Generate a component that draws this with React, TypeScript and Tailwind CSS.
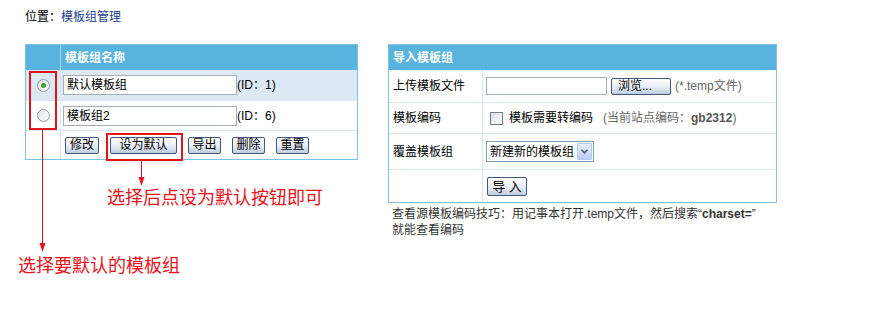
import React from 'react';

const btn =
  'h-[17px] border border-[#40577a] rounded-[2px] bg-gradient-to-b from-[#ffffff] via-[#e8eef6] to-[#bfcde0] text-[12px] leading-[15px] text-black flex items-center justify-center';

const Radio: React.FC<{ checked?: boolean }> = ({ checked }) => (
  <div className="w-[13px] h-[13px] rounded-full border border-[#8b99a6] bg-gradient-to-br from-[#dfe3e8] to-[#ffffff] flex items-center justify-center">
    {checked && <div className="w-[5px] h-[5px] rounded-full bg-[#3aa52a]" />}
  </div>
);

const GroupRow: React.FC<{ name: string; id: number; checked?: boolean }> = ({ name, id, checked }) => (
  <div className={`flex border-b border-[#d6e7f2] ${checked ? 'h-[31px] bg-[#dce8f4]' : 'h-[30px]'}`}>
    <div className="w-[35px] border-r border-[#d6e7f2] flex items-center justify-center">
      <Radio checked={checked} />
    </div>
    <div className="flex-1 flex items-center pl-[2px]">
      <div className="w-[174px] h-[20px] border border-[#a7adb5] bg-white pl-[3px] flex items-center text-[12px] text-black">
        {name}
      </div>
      <span className="text-[12px] text-black">(ID：{id})</span>
    </div>
  </div>
);

export default function App() {
  return (
    <div className="relative w-[884px] h-[315px] bg-white text-[12px] text-black font-['Liberation_Sans','Noto_Sans_CJK_SC',sans-serif]">
      {/* 位置 */}
      <div className="pl-[25px] pt-[10px] leading-[14px]">
        位置：<span className="text-[#1e3d8f]">模板组管理</span>
      </div>

      <div className="flex items-start gap-[30px] pl-[25px] mt-[20px]">
        {/* 模板组列表 */}
        <div className="w-[333px] border border-[#7fc1e1]">
          <div className="flex h-[25px] bg-[#58b3de]">
            <div className="w-[35px] border-r border-[#a9d6ec]" />
            <div className="flex-1 pl-[4px] flex items-center text-white font-bold">模板组名称</div>
          </div>
          <GroupRow name="默认模板组" id={1} checked />
          <GroupRow name="模板组2" id={6} />
          <div className="flex h-[28px]">
            <div className="w-[35px] border-r border-[#d6e7f2]" />
            <div className="flex-1 flex items-center pl-[4px] gap-[11px]">
              <button className={`${btn} w-[34px]`}>修改</button>
              <button className={`${btn} w-[67px]`}>设为默认</button>
              <button className={`${btn} w-[33px]`}>导出</button>
              <button className={`${btn} w-[33px]`}>删除</button>
              <button className={`${btn} w-[33px]`}>重置</button>
            </div>
          </div>
        </div>

        {/* 导入模板组 */}
        <div className="flex flex-col">
          <div className="w-[389px] border border-[#7fc1e1]">
            <div className="h-[25px] bg-[#58b3de] pl-[4px] flex items-center text-white font-bold">导入模板组</div>
            <div className="flex h-[33px] border-b border-[#d6e7f2]">
              <div className="w-[94px] border-r border-[#d6e7f2] pl-[4px] flex items-center">上传模板文件</div>
              <div className="flex-1 flex items-center pl-[3px]">
                <div className="w-[121px] h-[18px] border border-[#a7adb5] bg-white" />
                <button className={`${btn} w-[60px] ml-[4px] justify-start pl-[6px]`}>浏览...</button>
                <span className="ml-[4px] text-[#666]">(*.temp文件)</span>
              </div>
            </div>
            <div className="flex h-[31px] border-b border-[#d6e7f2]">
              <div className="w-[94px] border-r border-[#d6e7f2] pl-[4px] flex items-center">模板编码</div>
              <div className="flex-1 flex items-center pl-[7px]">
                <div className="w-[13px] h-[13px] border border-[#707d8a] bg-gradient-to-br from-[#dadde2] to-[#ffffff]" />
                <span className="ml-[6px]">模板需要转编码</span>
                <span className="ml-[10px] text-[#666]">
                  (当前站点编码：<b className="text-[#555]">gb2312</b>)
                </span>
              </div>
            </div>
            <div className="flex h-[36px] border-b border-[#d6e7f2]">
              <div className="w-[94px] border-r border-[#d6e7f2] pl-[4px] flex items-center">覆盖模板组</div>
              <div className="flex-1 flex items-center pl-[3px]">
                <div className="w-[108px] h-[21px] border border-[#7f9db9] bg-white flex items-center">
                  <span className="flex-1 pl-[3px]">新建新的模板组</span>
                  <div className="w-[15px] h-[17px] mr-[1px] rounded-[1px] border border-[#b5c8e8] bg-gradient-to-b from-[#e6eefc] to-[#bcd0f4] flex items-center justify-center">
                    <svg width="7" height="5" viewBox="0 0 7 5">
                      <path d="M0.5 0.8 L3.5 3.8 L6.5 0.8" fill="none" stroke="#4d6185" strokeWidth="1.6" />
                    </svg>
                  </div>
                </div>
              </div>
            </div>
            <div className="flex h-[32px]">
              <div className="w-[94px] border-r border-[#d6e7f2]" />
              <div className="flex-1 flex items-center pl-[4px]">
                <button className={`${btn} w-[40px] h-[19px] text-[13px]`}>导 入</button>
              </div>
            </div>
          </div>
          <div className="pl-[4px] mt-[3px] leading-[16px] text-[#333]">
            查看源模板编码技巧：用记事本打开.temp文件，然后搜索“<b>charset=</b>”
            <br />
            就能查看编码
          </div>
        </div>
      </div>

      {/* 标注 */}
      <div className="absolute left-[29px] top-[71px] w-[28px] h-[59px] border-2 border-[#e0141e]" />
      <div className="absolute left-[106px] top-[133px] w-[77px] h-[28px] border-2 border-[#e0141e]" />
      <svg className="absolute left-0 top-0 pointer-events-none" width="884" height="315">
        <line x1="42.5" y1="130" x2="42.5" y2="244" stroke="#e0141e" strokeWidth="1" />
        <polygon points="39.5,243 45.5,243 42.5,252" fill="#e0141e" />
        <line x1="141.5" y1="161" x2="141.5" y2="178" stroke="#e0141e" strokeWidth="1" />
        <polygon points="138.5,177 144.5,177 141.5,186" fill="#e0141e" />
      </svg>
      <div className="absolute left-[107px] top-[188px] text-[18px] leading-[20px] text-[#e8121c]">选择后点设为默认按钮即可</div>
      <div className="absolute left-[18px] top-[256px] text-[18px] leading-[20px] text-[#e8121c]">选择要默认的模板组</div>
    </div>
  );
}
